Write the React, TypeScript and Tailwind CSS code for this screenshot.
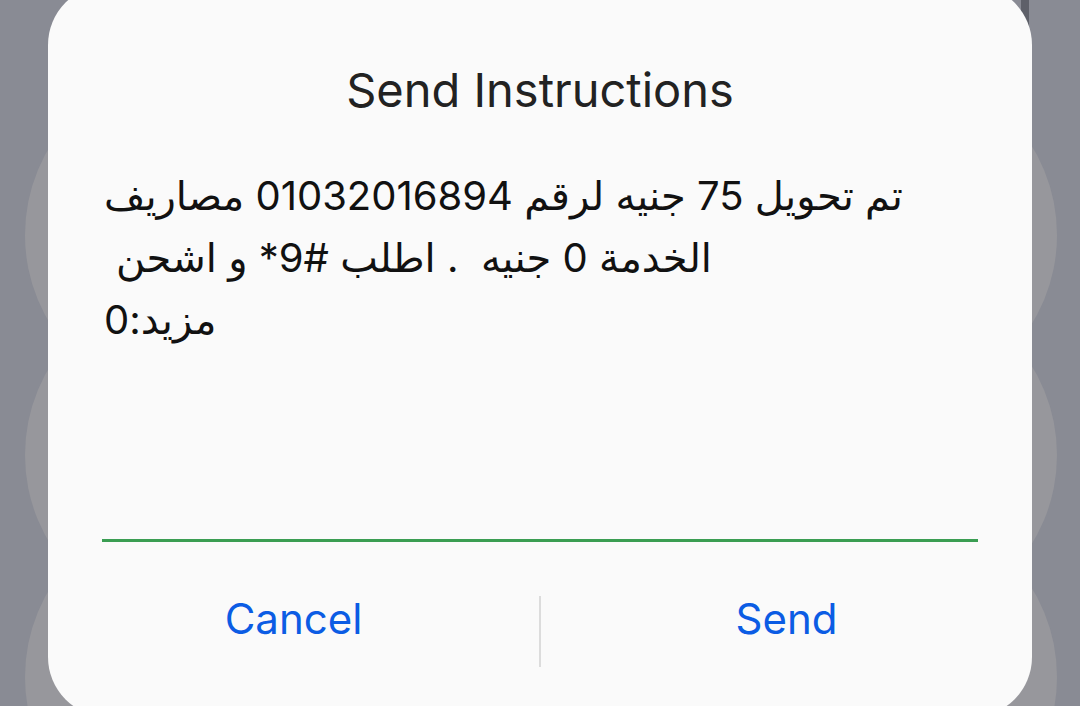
import React from 'react';

const keyRows = [235, 455, 677];

const SendInstructionsDialog = () => {
  const lines = [
    'تم تحويل 75 جنيه لرقم 01032016894 مصاريف',
    'الخدمة 0 جنيه  . اطلب #9* و اشحن',
    'مزيد:0',
  ];

  return (
    <div
      className="relative w-[1080px] h-[706px] overflow-hidden bg-[#898b94]"
      style={{ fontFamily: "Inter, 'DejaVu Sans', sans-serif" }}
    >
      {/* keypad buttons peeking out behind the dialog */}
      {keyRows.map((y) => (
        <React.Fragment key={y}>
          <div className="absolute w-[340px] h-[340px] rounded-full bg-[#97979c]" style={{ left: 25, top: y - 170 }} />
          <div className="absolute w-[340px] h-[340px] rounded-full bg-[#97979c]" style={{ left: 717, top: y - 170 }} />
        </React.Fragment>
      ))}
      <div className="absolute left-[1021px] top-0 w-[8px] h-[34px] bg-[#5e6069]" />

      {/* Dialog */}
      <div className="relative z-10 mx-[48px] mt-[-15px] h-[732px] rounded-[60px] bg-[#fafafa] flex flex-col">
        <h1 className="pt-[77px] text-center text-[47px] leading-[56px] text-[#222] tracking-[0px]">
          Send Instructions
        </h1>

        <div className="mx-[54px] mt-[47px] h-[377px] border-b-[3px] border-[#3a9d52]">
          {lines.map((line, i) => (
            <div
              key={i}
              className={`whitespace-pre text-[40px] leading-[62px] text-[#111] tracking-[-0.3px] ${i === 1 ? 'pl-[14px]' : 'pl-[2px]'}`}
            >
              {line}
            </div>
          ))}
        </div>

        <div className="flex-1 flex items-center pt-[4px]">
          <button className="flex-1 pb-[26px] text-center text-[42px] leading-[50px] text-[#0b5ce4]">Cancel</button>
          <div className="w-[2px] h-[71px] bg-[#dcdcdc]" />
          <button className="flex-1 pb-[26px] text-center text-[42px] leading-[50px] text-[#0b5ce4]">Send</button>
        </div>
      </div>
    </div>
  );
};

export default function App() {
  return <SendInstructionsDialog />;
}
